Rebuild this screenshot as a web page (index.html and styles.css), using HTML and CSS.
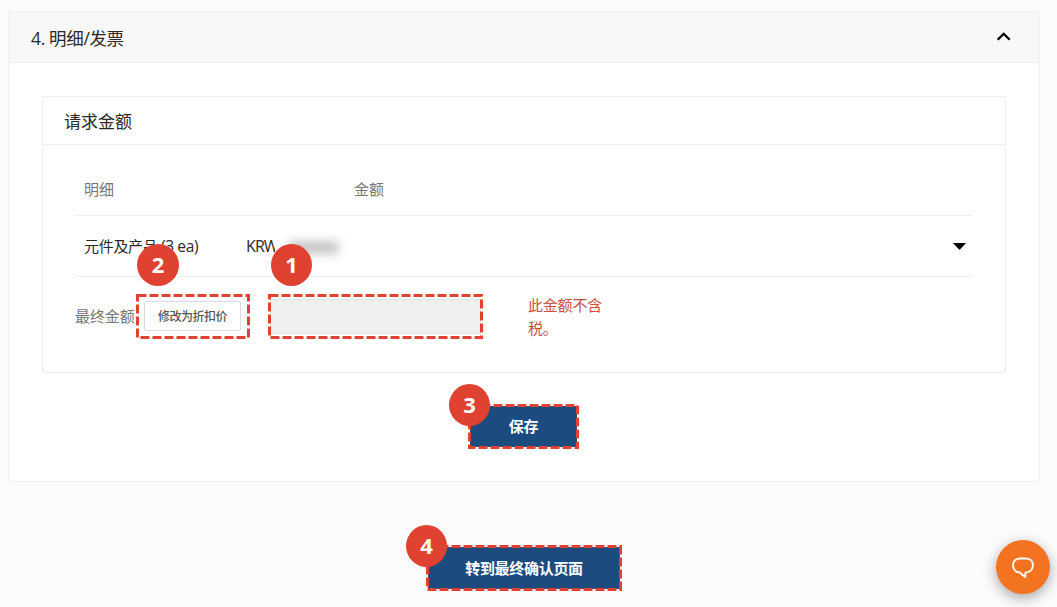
FILE: index.html
```html
<!DOCTYPE html>
<html lang="zh-CN">
<head>
<meta charset="utf-8">
<title>明细/发票</title>
<link rel="stylesheet" href="styles.css">
</head>
<body>
<main class="page">
  <section class="panel">
    <header class="panel-head">
      <h2 class="panel-title">4. 明细/发票</h2>
      <svg class="chevron" width="16" height="12" viewBox="0 0 16 12"><path d="M1.7 8.8 L7.7 2.8 L13.7 8.8" fill="none" stroke="#000" stroke-width="2.3"/></svg>
    </header>
    <div class="panel-body">
      <div class="card">
        <h3 class="card-title">请求金额</h3>
        <div class="table">
          <div class="row row-head"><span class="col-item">明细</span><span>金额</span></div>
          <div class="row row-item">
            <span class="col-name">元件及产品 <span class="latin">(3 ea)</span></span><span class="currency">KRW</span><span class="masked"></span>
            <svg class="caret" width="13" height="7" viewBox="0 0 13 7"><path d="M0 0H13L6.5 7Z"/></svg>
          </div>
          <div class="row-final">
            <span class="final-label">最终金额</span>
            <div class="mark mark-discount">
              <button class="discount">修改为折扣价</button>
              <svg class="dashes"><rect x="1.5" y="1.5" width="111" height="42"/></svg>
              <span class="badge badge-two">2</span>
            </div>
            <div class="mark mark-amount">
              <div class="amount"></div>
              <svg class="dashes"><rect x="1.5" y="1.5" width="212" height="42"/></svg>
              <span class="badge badge-one">1</span>
            </div>
            <p class="notice">此金额不含税。</p>
          </div>
        </div>
      </div>
      <div class="mark mark-save">
        <button class="primary">保存</button>
        <svg class="dashes"><rect x="1.5" y="1.5" width="108" height="42"/></svg>
        <span class="badge badge-three">3</span>
      </div>
    </div>
  </section>
  <div class="mark mark-confirm">
    <button class="primary">转到最终确认页面</button>
    <svg class="dashes"><rect x="1.5" y="1.5" width="193" height="43"/></svg>
    <span class="badge badge-four">4</span>
  </div>
</main>
<div class="chat">
  <svg width="24" height="24" viewBox="0 0 24 24"><path d="M9.5 3.4H14.5C19 3.4 22 6.2 22 10.2C22 14.2 19 17.3 14.3 17.7V22C12.4 20.9 10.4 19.2 9 17.6C4.9 17.2 2 14.2 2 10.2C2 6.2 5 3.4 9.5 3.4Z"/></svg>
</div>
</body>
</html>
```
FILE: styles.css
```css
* { box-sizing: border-box; }
body {
  margin: 0;
  height: 607px;
  overflow: hidden;
  background: #fcfcfc;
  color: #292929;
  font-family: "Open Sans", "Noto Sans CJK SC", sans-serif;
}
h2, h3, p { margin: 0; font-weight: 400; }
button { font-family: inherit; padding: 0; }
.page { padding: 11px 0 0 8px; }
.panel {
  width: 1032px;
  height: 471px;
  border: 1px solid #f0f0f0;
  border-radius: 2px;
  background: #fff;
}
.panel-head {
  display: flex;
  align-items: center;
  justify-content: space-between;
  height: 51px;
  padding: 0 27px 0 22px;
  border-bottom: 1px solid #efefef;
  background: #f8f8f8;
}
.panel-title { font-size: 17.5px; line-height: 24px; letter-spacing: -0.35px; padding-top: 2px; }
.panel-body { padding: 33px 33px 0; }
.card { width: 964px; height: 277px; border: 1px solid #f0f0f0; }
.card-title {
  height: 48px;
  padding-left: 21px;
  border-bottom: 1px solid #f0f0f0;
  font-size: 17px;
  line-height: 49px;
}
.table { padding: 10px 33px 0 32px; }
.row { display: flex; align-items: center; border-bottom: 1px solid #f0f0f0; padding-left: 9px; font-size: 15px; }
.row-head { height: 61px; padding-top: 7px; color: #777; }
.col-item { width: 270px; }
.row-item { height: 61px; letter-spacing: -0.3px; }
.col-name { width: 162px; line-height: 22px; white-space: nowrap; }
.latin { font-size: 15.5px; letter-spacing: -0.4px; }
.currency { width: 29px; overflow: hidden; font-size: 16px; line-height: 22px; letter-spacing: -0.9px; }
.masked { width: 49px; height: 13px; margin: 3px 0 0 14px; background: #c5c5c5; filter: blur(5px); }
.caret { margin: 1px 6px 0 auto; }
.row-final { display: flex; padding-top: 17px; }
.final-label { width: 61px; font-size: 15px; line-height: 45px; letter-spacing: -0.1px; color: #777; white-space: nowrap; }
.mark { position: relative; }
.dashes { position: absolute; inset: 0; width: 100%; height: 100%; }
.dashes rect { fill: none; stroke: #df4230; stroke-width: 3; stroke-dasharray: 9 3; }
.mark-discount { width: 114px; height: 45px; padding: 7px 9px 8px 8px; }
.discount {
  display: block;
  width: 97px;
  height: 30px;
  border: 1px solid #d9dde2;
  border-radius: 2px;
  background: #fff;
  color: #555;
  font-size: 12px;
  font-weight: 500;
  letter-spacing: -0.5px;
}
.mark-amount { width: 215px; height: 45px; margin-left: 18px; padding: 5px 2px; }
.amount { height: 35px; border: 1px solid #dfe1e5; background: #efefef; }
.notice { width: 80px; margin: 0 0 0 45px; color: #cb4f3e; font-size: 15px; line-height: 23px; letter-spacing: -0.2px; }
.badge {
  position: absolute;
  width: 41px;
  height: 42px;
  border-radius: 50%;
  background: #df4230;
  color: #fff;
  font-size: 22px;
  font-weight: 700;
  line-height: 41px;
  text-align: center;
}
.badge-one { left: 3px; top: -50px; }
.badge-two { left: 1px; top: -50px; width: 42px; }
.badge-three { left: -19px; top: -20px; }
.badge-four { left: -20px; top: -20px; }
.mark-save { width: 111px; height: 45px; margin: 31px 0 0 426px; padding: 2px; }
.mark-confirm { width: 196px; height: 46px; margin: 63px 0 0 418px; padding: 2px; }
.primary {
  display: block;
  width: 100%;
  height: 100%;
  padding-bottom: 2px;
  border: 0;
  background: #1c4b80;
  color: #fff;
  font-size: 15px;
  font-weight: 700;
  letter-spacing: -0.3px;
}
.chat {
  position: absolute;
  left: 996px;
  top: 540px;
  width: 54px;
  height: 54px;
  display: grid;
  place-items: center;
  border-radius: 50%;
  background: #f47321;
  box-shadow: 0 4px 14px rgba(0, 0, 0, 0.35);
}
.chat path { fill: none; stroke: #fff; stroke-width: 2; stroke-linejoin: round; }
```
